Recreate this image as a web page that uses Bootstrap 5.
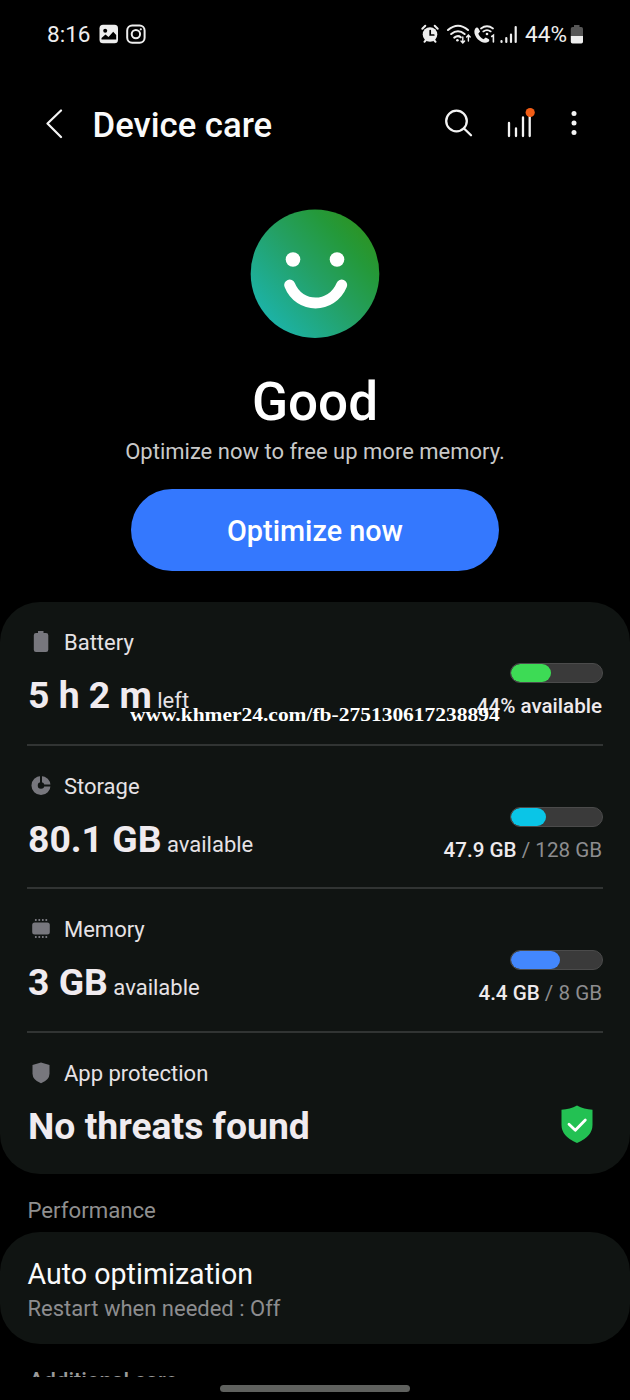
<!DOCTYPE html>
<html lang="en">
<head>
<meta charset="utf-8">
<meta name="viewport" content="width=device-width, initial-scale=1">
<title>Device care</title>
<link href="https://cdn.jsdelivr.net/npm/bootstrap@5.3.0/dist/css/bootstrap.min.css" rel="stylesheet">
<style>
  body { background: #000; color: #fff; font-family: Roboto, "Liberation Sans", sans-serif; }
  svg { display: block; flex: none; }
  .screen { width: 630px; height: 1400px; }
  .status { height: 68px; padding: 0 46px 0 47px; font-size: 22.6px; line-height: 30px; color: #eee; }
  .status span { padding-top: 2px; }
  .topbar { height: 114px; padding: 0 51px 0 45px; }
  .topbar h1 { font-size: 34.7px; line-height: 44px; font-weight: 500; color: #fafafa; margin-left: 28.5px; }
  .topbar .actions { padding-bottom: 2px; }
  .hero { height: 420px; padding-top: 27px; }
  .hero h2 { font-size: 53px; line-height: 64px; font-weight: 500; margin-top: 31px; }
  .hero p { font-size: 22px; line-height: 30px; color: #c9c9c9; margin-top: 3px; }
  .optimize { width: 368px; height: 82px; margin-top: 22px; padding-top: 9px; background: #3478fe; color: #fff; font-size: 28.8px; font-weight: 500; border: 0; }
  .panel { background: #101412; border-radius: 40px; padding: 0 27px; }
  .care-row { height: 141.5px; padding-top: 27px; padding-bottom: 23.5px; position: relative; }
  .care-row.ruled { height: 143.5px; border-bottom: 2px solid #313433; }
  .label-line { font-size: 22px; line-height: 28px; color: #e6e2e5; gap: 10px; height: 28px; }
  .value { font-size: 37.3px; line-height: 48px; height: 48.6px; font-weight: 700; color: #f0ebef; margin-top: 14.4px; padding-left: 1px; white-space: nowrap; }
  .value span { font-size: 22px; line-height: 1; font-weight: 400; color: #e6e2e5; }
  .meter { width: 93px; height: 20px; background: #3a3a3a; border: 1px solid #4b4b4b; border-radius: 10px; margin-bottom: 9px; }
  .meter .progress-bar { border-radius: 9px; }
  .amount { font-size: 20.6px; line-height: 28px; font-weight: 500; color: #eeeaed; white-space: nowrap; padding-right: 1px; }
  .amount span { color: #8d8d8f; font-weight: 400; }
  .shield { margin: 0 9px 7px 0; }
  .section-title { height: 58px; padding: 22px 27.5px 0; font-size: 22.2px; line-height: 28px; color: #8f8f8f; }
  .auto { height: 112px; padding-top: 24px; padding-left: 27.5px; }
  .auto h3 { font-size: 28.6px; line-height: 36px; font-weight: 400; color: #fafafa; }
  .auto p { font-size: 22px; line-height: 28px; color: #8d8d8f; margin-top: 3px; }
  .cut { height: 33px; padding: 22.5px 29px 0; font-size: 22px; line-height: 28px; font-weight: 500; color: #9a9a9a; }
  .pill { width: 190px; height: 7px; background: #5f615e; margin-top: 8px; }
  .stamp { position: absolute; left: 103px; top: 101px; font: 700 19.5px/24px "Liberation Serif", serif; color: #fff; white-space: nowrap; transform: scaleX(1.101); transform-origin: 0 50%; z-index: 2; }
</style>
</head>
<body>
<main class="screen overflow-hidden d-flex flex-column">
  <div class="status d-flex align-items-center justify-content-between">
    <div class="d-flex align-items-center">
      <span>8:16</span>
      <svg width="20" height="20" viewBox="0 0 20 20" style="margin-left:8px"><rect x=".5" y=".8" width="18.5" height="18.5" rx="3.5" fill="#eee"/><circle cx="6.2" cy="6.8" r="2" fill="#000"/><path d="M2.5 15.5V14l4-3.6 3 2.6 4.7-5.200 3 3.2v4.500z" fill="#000"/></svg>
      <svg width="20" height="20" viewBox="0 0 20 20" style="margin-left:7px" fill="none" stroke="#eee" stroke-width="2"><rect x="1.200" y="1.400" width="17.400" height="17.400" rx="5"/><circle cx="9.900" cy="10.100" r="4.200"/><circle cx="14.800" cy="5.300" r="1.100" fill="#eee" stroke="none"/></svg>
    </div>
    <div class="d-flex align-items-center">
      <svg width="104" height="24" viewBox="0 0 104 24" fill="none" stroke="#eee" stroke-linecap="round" style="margin-right:1px">
        <circle cx="10" cy="12.500" r="7.300" fill="#eee" stroke="none"/><path d="M2.300 6.700 5.300 3.700M17.700 6.700l-3-3M4.500 19.700l1.400-1.400M15.500 19.700l-1.400-1.400" stroke-width="2"/><path d="M10.200 8.500v4.500h3.600" stroke="#000" stroke-width="1.700"/>
        <path d="M28 8q10-8.500 20 0M31.200 12q6.800-5.500 13.400 0M34.300 15.600q3.700-2.700 6.500-.3" stroke-width="2.100"/><circle cx="37.400" cy="18.300" r="1.300" fill="#eee" stroke="none"/><path d="M42.800 15v5.800M41 19l1.800 2 1.800-2M48.400 19v-5.800M46.600 15l1.800-2 1.800 2" stroke-width="1.400"/>
        <path d="M55.300 6.500c1-1.500 2.500-1.300 3.300.2l1.500 2.900-1.800 2.200c1.200 2.500 2.800 4.200 5.200 5.400l2.200-1.700 2.800 1.600c1.100.6 1 1.900 0 2.700-7 4.300-17.300-6.800-13.200-13.300z" fill="#eee" stroke="none"/><path d="M61 6.500q6-4.500 12 0M63.300 9.400q3.700-2.700 7.400 0" stroke-width="1.800"/><circle cx="67" cy="12" r="1.300" fill="#eee" stroke="none"/><path d="m71.700 14.500 1.700-1.200V20" stroke-width="1.600"/>
        <path d="M81.500 18.500v1M86.300 15.500v4M91 12v7.500M95.700 4.500v15" stroke-width="2.200" transform="translate(0 .5)"/>
      </svg>
      <span>44%</span>
      <svg width="14" height="20" viewBox="0 0 14 20" style="margin-left:3px"><path d="M4 1h5.500v2h1.700q1.800 0 1.800 1.800V12H.8V4.800Q.8 3 2.600 3H4z" fill="#565656"/><path d="M.8 12H13v5.700q0 1.700-1.700 1.700H2.500q-1.700 0-1.700-1.700z" fill="#eee"/></svg>
    </div>
  </div>

  <header class="topbar d-flex align-items-center">
    <svg width="19" height="32" viewBox="0 0 19 32" fill="none" stroke="#f4f4f4" stroke-width="2.200" stroke-linecap="round" stroke-linejoin="round"><path d="M16 1.500 2.500 14.500 16 28"/></svg>
    <h1 class="mb-0">Device care</h1>
    <div class="actions ms-auto d-flex align-items-center">
      <svg width="30" height="30" viewBox="0 0 30 30" fill="none" stroke="#f4f4f4" stroke-width="2.300" stroke-linecap="round"><circle cx="12.500" cy="12" r="10.300"/><path d="m20 19.500 7 6.800"/></svg>
      <svg width="32" height="34" viewBox="0 0 32 34" style="margin-left:31px" stroke="#f4f4f4" stroke-width="2.300" stroke-linecap="round"><path d="M4 16v13M11 21.500V29M18 10.500V29M24.700 8v21"/><circle cx="25.200" cy="5.500" r="4.600" fill="#f15d16" stroke="none"/></svg>
      <svg width="10" height="28" viewBox="0 0 10 28" fill="#f4f4f4" style="margin-left:32px"><circle cx="5" cy="3.500" r="2.500"/><circle cx="5" cy="12.900" r="2.500"/><circle cx="5" cy="22.500" r="2.500"/></svg>
    </div>
  </header>

  <section class="hero d-flex flex-column align-items-center text-center">
    <svg width="130" height="130" viewBox="0 0 130 130">
      <defs><linearGradient id="mood" x1=".1" y1=".85" x2=".88" y2=".15"><stop offset="0" stop-color="#1cb3a9"/><stop offset=".5" stop-color="#24a064"/><stop offset=".82" stop-color="#24993a"/><stop offset="1" stop-color="#2b9426"/></linearGradient></defs>
      <circle cx="65" cy="64.700" r="64.300" fill="url(#mood)"/>
      <circle cx="43" cy="50.500" r="7.300" fill="#fff"/><circle cx="87" cy="50.500" r="7.300" fill="#fff"/>
      <path d="M39.700 76c9.500 24 42 24 52 0" fill="none" stroke="#fff" stroke-width="11" stroke-linecap="round"/>
    </svg>
    <h2 class="mb-0">Good</h2>
    <p class="mb-0">Optimize now to free up more memory.</p>
    <button class="optimize btn rounded-pill" type="button">Optimize now</button>
  </section>

  <section class="panel">
    <div class="care-row ruled d-flex justify-content-between align-items-end">
      <div>
        <div class="label-line d-flex"><svg width="27" height="28" viewBox="0 0 27 28"><path d="M11 2h5.500v2H19q2.300 0 2.300 2.300v14.500q0 2.200-2.300 2.200H9q-2.200 0-2.200-2.200V6.300Q6.800 4 9 4h2z" fill="#77777d"/></svg><span>Battery</span></div>
        <div class="value">5 h 2 m<span> left</span></div>
      </div>
      <div class="d-flex flex-column align-items-end">
        <div class="meter progress"><div class="progress-bar" style="width:44%;background:#3ddb55"></div></div>
        <div class="amount">44% available</div>
      </div>
      <div class="stamp">www.khmer24.com/fb-275130617238894</div>
    </div>
    <div class="care-row ruled d-flex justify-content-between align-items-end">
      <div>
        <div class="label-line d-flex"><svg width="27" height="28" viewBox="0 0 27 28"><circle cx="14" cy="12.500" r="6.400" fill="none" stroke="#77777d" stroke-width="6.300"/><path d="M14 2v10.500h11" fill="none" stroke="#101412" stroke-width="2"/></svg><span>Storage</span></div>
        <div class="value">80.1 GB<span> available</span></div>
      </div>
      <div class="d-flex flex-column align-items-end">
        <div class="meter progress"><div class="progress-bar" style="width:38%;background:#0ac5e7"></div></div>
        <div class="amount">47.9 GB <span>/ 128 GB</span></div>
      </div>
    </div>
    <div class="care-row ruled d-flex justify-content-between align-items-end">
      <div>
        <div class="label-line d-flex"><svg width="27" height="28" viewBox="0 0 27 28"><rect x="5.200" y="6.500" width="17.600" height="12" rx="2.500" fill="#77777d"/><path d="M8.800 3v2M12.300 3v2M15.800 3v2M19.300 3v2M8.800 20v2M12.300 20v2M15.800 20v2M19.300 20v2" stroke="#77777d" stroke-width="1.700"/></svg><span>Memory</span></div>
        <div class="value">3 GB<span> available</span></div>
      </div>
      <div class="d-flex flex-column align-items-end">
        <div class="meter progress"><div class="progress-bar" style="width:54%;background:#4387fd"></div></div>
        <div class="amount">4.4 GB <span>/ 8 GB</span></div>
      </div>
    </div>
    <div class="care-row d-flex justify-content-between align-items-end">
      <div>
        <div class="label-line d-flex"><svg width="27" height="28" viewBox="0 0 27 28"><path d="M14 2.500 22.500 5v8.500q0 6.500-8.500 9.800-8.500-3.300-8.500-9.800V5z" fill="#77777d"/></svg><span>App protection</span></div>
        <div class="value">No threats found</div>
      </div>
      <svg class="shield" width="34" height="40" viewBox="0 0 34 40"><path d="M17 1.500Q24 5.200 32.500 5.700V21Q32.500 32.500 17 39 1.500 32.500 1.500 21V5.700Q10 5.200 17 1.500z" fill="#23c153"/><path d="m9 20.200 6.300 6.100L25.300 16" fill="none" stroke="#fff" stroke-width="2.800" stroke-linecap="round" stroke-linejoin="round"/></svg>
    </div>
  </section>

  <div class="section-title">Performance</div>
  <section class="panel auto">
    <h3 class="mb-0">Auto optimization</h3>
    <p class="mb-0">Restart when needed : Off</p>
  </section>
  <div class="cut overflow-hidden">Additional care</div>
  <div class="pill rounded-pill mx-auto flex-shrink-0"></div>
</main>
<script src="https://cdn.jsdelivr.net/npm/bootstrap@5.3.0/dist/js/bootstrap.bundle.min.js"></script>
</body>
</html>
